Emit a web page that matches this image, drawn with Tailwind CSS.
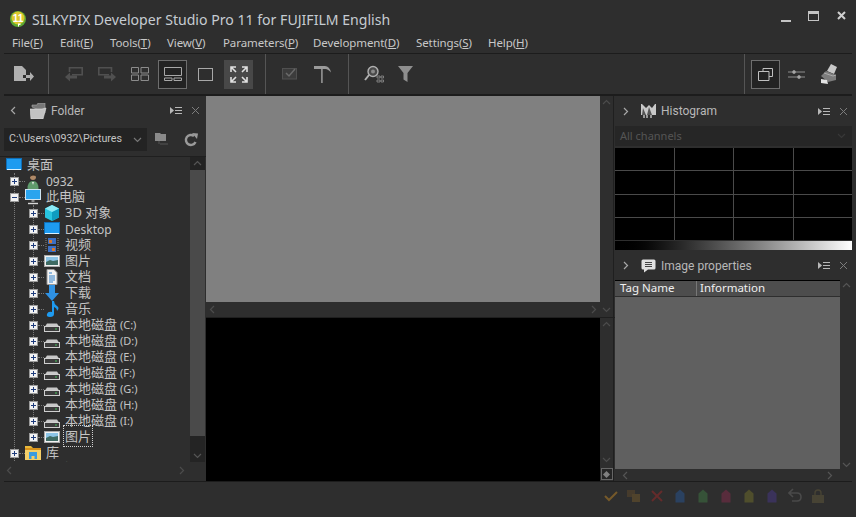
<!DOCTYPE html>
<html lang="en">
<head>
    <meta charset="UTF-8">
    <title>SILKYPIX Developer Studio Pro 11 for FUJIFILM English</title>
    <script src="https://cdn.jsdelivr.net/npm/@tailwindcss/browser@4"></script>
</head>
<body class="bg-[#2e2e2e]">
    <!-- shared icons -->
    <svg class="hidden">
        <symbol id="up" viewBox="0 0 9 9"><path d="M1 6l3.500-3.500L8 6" fill="none" stroke="currentColor" stroke-width="1.200"/></symbol>
        <symbol id="down" viewBox="0 0 9 9"><path d="M1 3l3.500 3.500L8 3" fill="none" stroke="currentColor" stroke-width="1.200"/></symbol>
        <symbol id="left" viewBox="0 0 9 9"><path d="M6 1L2.500 4.500 6 8" fill="none" stroke="currentColor" stroke-width="1.200"/></symbol>
        <symbol id="right" viewBox="0 0 9 9"><path d="M3 1l3.500 3.500L3 8" fill="none" stroke="currentColor" stroke-width="1.200"/></symbol>
        <symbol id="options" viewBox="0 0 12 9"><path d="M0 1l4 3.500L0 8z" fill="#b8b8b8"/><path d="M5 1.500h7M5 4.500h7M5 7.500h7" stroke="#b8b8b8"/></symbol>
        <symbol id="close" viewBox="0 0 9 9"><path d="M1 1l7 7M8 1L1 8" stroke="#7d7d7d"/></symbol>
        <symbol id="plus" viewBox="0 0 9 9"><rect x=".5" y=".5" width="8" height="8" fill="#f2f2f2" stroke="#9a9a9a"/><path d="M2 4.500h5M4.500 2v5" stroke="#1d3b7c"/></symbol>
        <symbol id="minus" viewBox="0 0 9 9"><rect x=".5" y=".5" width="8" height="8" fill="#f2f2f2" stroke="#9a9a9a"/><path d="M2 4.500h5" stroke="#1d3b7c"/></symbol>
        <symbol id="monitor" viewBox="0 0 16 16"><rect x=".5" y=".5" width="15" height="10" fill="#2aa4ee" stroke="#cfe4f2"/><path d="M6.500 11h3v2h-3z" fill="#8a8a8a"/><path d="M3 14.500h10" stroke="#d8d8d8" stroke-width="1.400"/></symbol>
        <symbol id="desk" viewBox="0 0 16 16"><rect x=".5" y="1.500" width="15" height="11" fill="#1e9bf0" stroke="#0f6fb8"/><path d="M1 12.500h14" stroke="#d8f0ff"/></symbol>
        <symbol id="user" viewBox="0 0 16 16"><circle cx="8" cy="4" r="3" fill="#b08a68"/><path d="M5 4Q5 .5 8 .5T11 3.500Q8 1.500 5 4z" fill="#2c2620"/><path d="M2.500 16q0-8 5.500-8t5.500 8z" fill="#5f9a6c"/><path d="M7 9h2l-1 3z" fill="#e8e8e8"/></symbol>
        <symbol id="cube" viewBox="0 0 16 16"><path d="M8 0l7 3.500v9L8 16l-7-3.500v-9z" fill="#28c4e0"/><path d="M8 7l7-3.500v9L8 16z" fill="#0f9cc0"/><path d="M8 7L1 3.500 8 0l7 3.500z" fill="#8ceaf6"/></symbol>
        <symbol id="film" viewBox="0 0 16 16"><rect x="1" y="0" width="14" height="16" fill="#2c2c2c"/><rect x="4" y="1" width="8" height="6" fill="#3b6fc4"/><rect x="4" y="9" width="8" height="6" fill="#3b6fc4"/><path d="M5 3h3v3H5zM8 11h3v3H8z" fill="#d8772a"/><path d="M2 1v14M14 1v14" stroke="#888" stroke-dasharray="1 1"/></symbol>
        <symbol id="pic" viewBox="0 0 16 16"><rect x=".5" y="2.500" width="15" height="11" fill="#f2f2f2" stroke="#aaa"/><rect x="2" y="4" width="12" height="8" fill="#8cc4e6"/><path d="M2 9l4-2 3 1 5-1v5H2z" fill="#3f6b63"/></symbol>
        <symbol id="doc" viewBox="0 0 16 16"><path d="M3 .5h7l3 3V15.500H3z" fill="#f4f4f4" stroke="#999"/><path d="M5 4h3M5 7h6M5 9h6M5 11h6M5 13h4" stroke="#2f7fc8"/></symbol>
        <symbol id="dl" viewBox="0 0 16 16"><path d="M5 0h6v8h4l-7 8-7-8h4z" fill="#2f92e4"/></symbol>
        <symbol id="note" viewBox="0 0 16 16"><path d="M8 0h2q0 3 3 5t0 5q0-3-3-4v7q0 3-4 3t-3-3 5-2z" fill="#1e9bf0"/></symbol>
        <symbol id="drive" viewBox="0 0 16 16"><path d="M3 6.500h10l2 3H1z" fill="#c8c8c8"/><rect x=".5" y="9.500" width="15" height="5" fill="#3c3c3c" stroke="#cfcfcf"/><path d="M11 12h2" stroke="#46c35a"/></symbol>
        <symbol id="lib" viewBox="0 0 16 16"><path d="M0 1h6l2 2h8v12H0z" fill="#e8b93c"/><rect x="0" y="3" width="16" height="2" fill="#d9931c"/><rect x="0" y="5" width="16" height="10" fill="#f4cf68"/><rect x="4" y="7" width="8" height="7" fill="#3a9be0"/><rect x="6.500" y="11" width="3" height="3" fill="#f4cf68"/></symbol>
        <symbol id="net" viewBox="0 0 16 16"><circle cx="8" cy="8" r="7" fill="#8cc4e6"/><path d="M4 5q4-3 8 0l-2 5-5-1z" fill="#e8f4fc"/></symbol>
        <symbol id="tag" viewBox="0 0 14 14"><path d="M2.500 4.500L7 .5l4.500 4V13.500h-9z" fill="currentColor"/></symbol>
    </svg>

    <div class="flex flex-col w-[856px] h-[517px] overflow-hidden bg-[#2e2e2e] text-[#c4c4c4] font-['Noto_Sans','Noto_Sans_CJK_SC',sans-serif]">
        <!-- title bar -->
        <div class="flex items-center h-[33px] shrink-0 pl-[10px] pr-[10px]">
            <svg class="w-[16px] h-[16px] mt-[4px]" viewBox="0 0 16 16">
                <circle cx="8" cy="8" r="8" fill="#5da832"/>
                <circle cx="8" cy="7" r="6.500" fill="#dcc82c"/>
                <text x="8" y="10.500" font-size="10" font-weight="700" text-anchor="middle" fill="#fff" font-family="Liberation Sans">11</text>
                <path d="M8 12.500h2.500v1.500H9v1.500H8z" fill="#fff"/>
            </svg>
            <span class="ml-[6px] mt-[7px] text-[14.100px] leading-none text-[#c6ccd2]">SILKYPIX Developer Studio Pro 11 for FUJIFILM English</span>
            <div class="ml-auto flex items-center">
                <div class="w-[10px] h-[2px] bg-[#c4c4c4] mt-[8px] mr-[17px]"></div>
                <div class="w-[11px] h-[10px] border border-t-[3px] border-[#c4c4c4] mr-[18px] -mt-[2px]"></div>
                <svg class="w-[9px] h-[9px] -mt-[2px]" viewBox="0 0 9 9"><path d="M1 1l7 7M8 1L1 8" stroke="#d0d0d0" stroke-width="2"/></svg>
            </div>
        </div>

        <!-- menu -->
        <div class="flex h-[20px] shrink-0 items-center pl-[12px] text-[11.500px] tracking-[-.1px] leading-none text-[#c8c8c8]">
            <span class="w-[48px]">File(<u>F</u>)</span>
            <span class="w-[50px]">Edit(<u>E</u>)</span>
            <span class="w-[57px]">Tools(<u>T</u>)</span>
            <span class="w-[56px]">View(<u>V</u>)</span>
            <span class="w-[90px]">Parameters(<u>P</u>)</span>
            <span class="w-[103px]">Development(<u>D</u>)</span>
            <span class="w-[72px]">Settings(<u>S</u>)</span>
            <span>Help(<u>H</u>)</span>
        </div>

        <!-- toolbar -->
        <div class="flex h-[43px] shrink-0 items-stretch mx-[4px] border-t border-[#1c1c1c] border-b-[2px] border-b-[#1c1c1c]">
            <div class="flex items-center w-[45px] border-r border-[#555] pl-[10px]">
                <svg class="w-[20px] h-[16px]" viewBox="0 0 20 16"><path d="M0 0h8l4 4v5H9v3h3v3H0z" fill="#b0b0b0"/><path d="M12 9h4V6l4 4.500-4 4.500v-3h-4z" fill="#b0b0b0"/></svg>
            </div>
            <div class="flex items-center gap-[4px] pl-[10px] pr-[12px] border-r border-[#555]">
                <div class="flex items-center justify-center w-[29px] h-[29px]"><svg class="w-[18px] h-[15px]" viewBox="0 0 18 15"><path d="M4.500 5V.8h12.700v7H7" fill="none" stroke="#505050" stroke-width="1.600"/><path d="M0 10l5-4.500V8.500h7v3H5V14.500z" fill="#505050"/></svg></div>
                <div class="flex items-center justify-center w-[29px] h-[29px]"><svg class="w-[18px] h-[15px]" viewBox="0 0 18 15"><path d="M13.500 5V.8H.8v7H11" fill="none" stroke="#505050" stroke-width="1.600"/><path d="M18 10l-5-4.500V8.500H6v3h7V14.500z" fill="#505050"/></svg></div>
                <div class="flex items-center justify-center w-[29px] h-[29px]"><svg class="w-[18px] h-[14px]" viewBox="0 0 18 14" fill="none" stroke="#8c8c8c"><path d="M.5.500h7v5.500h-7zM10 .5h7.500v5.500H10zM.5 8h7v5.500h-7zM10 8h7.500v5.500H10z"/></svg></div>
                <div class="flex items-center justify-center w-[29px] h-[29px] bg-[#232323] border border-[#6e6e6e]"><svg class="w-[18px] h-[14px]" viewBox="0 0 18 14" fill="none" stroke="#a8a8a8"><path d="M.5.500h17v8h-17zM.5 11h7.500v2.500H.5zM10 11h7.500v2.500H10z"/></svg></div>
                <div class="flex items-center justify-center w-[29px] h-[29px]"><div class="w-[15px] h-[13px] border border-[#a8a8a8]"></div></div>
                <div class="flex items-center justify-center w-[29px] h-[29px] bg-[#484848]"><svg class="w-[18px] h-[17px]" viewBox="0 0 18 17" fill="none" stroke="#e0e0e0" stroke-width="1.600"><path d="M1 6V1h5M1 1l5 5M17 6V1h-5M17 1l-5 5M1 11v5h5M1 16l5-5M17 11v5h-5M17 16l-5-5"/></svg></div>
            </div>
            <div class="flex items-center gap-[4px] pl-[9px] pr-[11px] border-r border-[#555]">
                <div class="flex items-center justify-center w-[29px] h-[29px]"><svg class="w-[16px] h-[12px]" viewBox="0 0 16 12"><rect x=".5" y=".5" width="14" height="10.500" fill="#3c3c3c" stroke="#505050"/><path d="M4 5l3 3 6-7" fill="none" stroke="#6a6a6a" stroke-width="1.500"/></svg></div>
                <div class="flex items-center justify-center w-[29px] h-[29px]"><svg class="w-[17px] h-[17px]" viewBox="0 0 17 17"><path d="M0 0h11q4.500 0 6 6.500-3-3.500-5.500-3.500H0z" fill="#9a9a9a"/><path d="M7 3h1.800v14H7z" fill="#8a8a8a"/></svg></div>
            </div>
            <div class="flex items-center pl-[10px]">
                <div class="flex items-center justify-center w-[29px] h-[29px]"><svg class="w-[20px] h-[18px]" viewBox="0 0 20 18"><circle cx="9" cy="6.500" r="5" fill="#4a4a4a" stroke="#b0b0b0" stroke-width="1.400"/><circle cx="9" cy="6.500" r="2" fill="#8a8a8a"/><path d="M5 10l-4 5" stroke="#b0b0b0" stroke-width="2"/><path d="M13 11h3v2h-3zM17 11h2.500v2H17zM13 15h3v2h-3zM17 15h2.500v2H17z" fill="none" stroke="#909090" stroke-width=".8"/></svg></div>
                <div class="flex items-center justify-center w-[29px] h-[29px] ml-[3px]"><svg class="w-[15px] h-[16px]" viewBox="0 0 15 16"><path d="M0 0h15L9.500 7v9l-4-2.500V7z" fill="#8e8e8e"/></svg></div>
            </div>
            <div class="flex items-center ml-auto w-[108px] border-l border-[#555] pl-[6px]">
                <div class="flex items-center justify-center w-[29px] h-[29px] bg-[#232323] border border-[#6e6e6e]"><svg class="w-[15px] h-[13px]" viewBox="0 0 15 13" fill="none" stroke="#c0c0c0"><path d="M5 3V.5h9.500v8H11M.5 3.500H11v9H.5z"/></svg></div>
                <div class="flex items-center justify-center w-[29px] h-[29px] ml-[2px]"><svg class="w-[17px] h-[9px]" viewBox="0 0 17 9" fill="none" stroke="#8e8e8e"><path d="M0 2h17M0 7h17"/><circle cx="6" cy="2" r="1.500" fill="#b0b0b0"/><circle cx="11" cy="7" r="1.500" fill="#b0b0b0"/></svg></div>
                <div class="flex items-center justify-center w-[29px] h-[29px] ml-[4px]"><svg class="w-[17px] h-[20px]" viewBox="0 0 17 20"><path d="M6 7l4-7 6 3-3 7z" fill="#c8c8c8"/><path d="M0 12l5-5 10 4v5l-8 2z" fill="#7c7c7c"/><path d="M3 9l9 3 3-1" stroke="#aaa" fill="none"/><path d="M0 15l6 1 1 4-7-1z" fill="#e4e4e4"/></svg></div>
            </div>
        </div>

        <!-- panels -->
        <div class="flex h-[385px] shrink-0">
            <!-- folder panel -->
            <div class="flex flex-col w-[206px] shrink-0">
                <div class="flex items-center h-[29px] shrink-0 pl-[9px] text-[#b8b8b8]">
                    <svg class="w-[9px] h-[9px] shrink-0 text-[#a8a8a8]"><use href="#left"/></svg>
                    <svg class="w-[17px] h-[16px] ml-[12px] shrink-0" viewBox="0 0 17 16"><path d="M2 4V2h5l1-2h7v10z" fill="#777" stroke="#aaa" stroke-width=".6"/><path d="M0 6h12l4-1-3 11H1z" fill="#c2c2c2" stroke="#e0e0e0" stroke-width=".6"/></svg>
                    <span class="ml-[4px] mt-[1px] font-['Roboto'] text-[12px] leading-none">Folder</span>
                    <svg class="w-[12px] h-[9px] ml-auto shrink-0"><use href="#options"/></svg>
                    <svg class="w-[9px] h-[9px] ml-[9px] mr-[6px] shrink-0"><use href="#close"/></svg>
                </div>
                <div class="flex items-center h-[23px] mt-[3px] shrink-0">
                    <div class="flex items-center w-[143px] h-full ml-[4px] pl-[5px] pr-[5px] bg-[#232323] font-['Roboto'] text-[10.700px] leading-none whitespace-nowrap">
                        C:\Users\0932\Pictures
                        <svg class="w-[9px] h-[9px] ml-auto text-[#777]"><use href="#down"/></svg>
                    </div>
                    <svg class="w-[13px] h-[13px] ml-[8px]" viewBox="0 0 13 13"><path d="M0 0h5l1 1h5v7H0z" fill="#8a8a8a"/><path d="M5 11h8M4 8v3" stroke="#555"/></svg>
                    <svg class="w-[14px] h-[14px] ml-[16px]" viewBox="0 0 14 14"><path d="M11.500 9A5 5 0 1 1 10 3" fill="none" stroke="#9a9a9a" stroke-width="2.400"/><path d="M8 0l6 .5-1 5.500z" fill="#9a9a9a"/></svg>
                </div>
                <div class="flex h-[306px] mt-[5px] shrink-0 border-t border-[#1f1f1f]">
                    <div id="tree" class="w-[190px] h-full overflow-hidden text-[13px] leading-none"></div>
                    <div class="flex flex-col w-[15px] h-full">
                        <div class="flex items-center justify-center h-[13px] bg-[#232323]"><svg class="w-[9px] h-[9px] text-[#555]"><use href="#up"/></svg></div>
                        <div class="h-[266px] bg-[#4a4a4a]"></div>
                        <div class="flex items-end justify-center flex-1 bg-[#242424] pb-[2px]"><svg class="w-[9px] h-[9px] text-[#555]"><use href="#down"/></svg></div>
                    </div>
                </div>
                <div class="flex items-center justify-between h-[16px] px-[5px] pr-[20px] text-[#4c4c4c]">
                    <svg class="w-[9px] h-[9px]"><use href="#left"/></svg>
                    <svg class="w-[9px] h-[9px]"><use href="#right"/></svg>
                </div>
            </div>

            <!-- preview -->
            <div class="flex flex-col w-[409px] shrink-0">
                <div class="flex h-[222px] shrink-0 border-b border-[#1f1f1f]">
                    <div class="flex flex-col w-[394px]">
                        <div class="h-[206px] bg-[#808080]"></div>
                        <div class="flex items-center justify-between flex-1 px-[2px] text-[#4c4c4c]">
                            <svg class="w-[9px] h-[9px]"><use href="#left"/></svg>
                            <svg class="w-[9px] h-[9px]"><use href="#right"/></svg>
                        </div>
                    </div>
                    <div class="flex flex-col justify-between items-center w-[14px] pt-[2px] pb-[3px] border-r border-[#1f1f1f] text-[#4c4c4c]">
                        <svg class="w-[9px] h-[9px]"><use href="#up"/></svg>
                        <svg class="w-[9px] h-[9px]"><use href="#down"/></svg>
                    </div>
                </div>
                <div class="flex flex-1">
                    <div class="w-[394px] h-full bg-black"></div>
                    <div class="flex flex-col items-center w-[14px] pt-[2px] border-r border-[#1f1f1f] text-[#4c4c4c]">
                        <svg class="w-[9px] h-[9px]"><use href="#up"/></svg>
                        <svg class="w-[9px] h-[9px] mt-[126px]"><use href="#down"/></svg>
                        <div class="flex items-center justify-center w-[12px] h-[12px] mt-[4px] border border-[#666] bg-[#262626]"><div class="w-[5px] h-[5px] rotate-45 bg-[#808080]"></div></div>
                    </div>
                </div>
            </div>

            <!-- histogram and properties -->
            <div class="flex flex-col w-[237px] shrink-0">
                <div class="flex items-center h-[30px] shrink-0 pl-[6px] text-[#b8b8b8]">
                    <svg class="w-[9px] h-[9px] text-[#a8a8a8]"><use href="#right"/></svg>
                    <svg class="w-[15px] h-[14px] ml-[11px]" viewBox="0 0 15 14"><path d="M0 0h1l4 4 3-3 3 3 3-4h1v11H0z" fill="#c8c8c8"/><path d="M2 4l3 7H1zM8 3l3 8H6z" fill="#555"/><path d="M3 11v3M6 11v3M10 11v3" stroke="#fff"/></svg>
                    <span class="ml-[5px] font-['Roboto'] text-[12px] leading-none">Histogram</span>
                    <svg class="w-[12px] h-[9px] ml-auto"><use href="#options"/></svg>
                    <svg class="w-[9px] h-[9px] ml-[9px] mr-[4px]"><use href="#close"/></svg>
                </div>
                <div class="flex items-center justify-between h-[20px] shrink-0 pl-[5px] pr-[6px] pb-[2px] bg-[#262626] text-[11px] leading-none text-[#555]">
                    All channels
                    <svg class="w-[9px] h-[9px] text-[#383838]"><use href="#down"/></svg>
                </div>
                <div class="grid grid-cols-4 grid-rows-4 h-[92px] mt-[2px] shrink-0 bg-[#4a4a4a] gap-px">
                    <div class="bg-black"></div><div class="bg-black"></div><div class="bg-black"></div><div class="bg-black"></div>
                    <div class="bg-black"></div><div class="bg-black"></div><div class="bg-black"></div><div class="bg-black"></div>
                    <div class="bg-black"></div><div class="bg-black"></div><div class="bg-black"></div><div class="bg-black"></div>
                    <div class="bg-black"></div><div class="bg-black"></div><div class="bg-black"></div><div class="bg-black"></div>
                </div>
                <div class="h-[9px] mt-[1px] shrink-0 bg-gradient-to-r from-black to-white"></div>
                <div class="flex items-center h-[30px] shrink-0 pl-[6px] pt-[1px] text-[#b8b8b8]">
                    <svg class="w-[9px] h-[9px] text-[#a8a8a8]"><use href="#right"/></svg>
                    <svg class="w-[15px] h-[14px] ml-[11px]" viewBox="0 0 15 14"><path d="M2 .5h11q1.500 0 1.500 1.500v7q0 1.500-1.500 1.500H7L3 13.500v-3H2Q.5 10.500.5 9V2Q.5.5 2 .5z" fill="#e0e0e0"/><path d="M4 3.500h7M4 5.500h7M4 7.500h7" stroke="#444"/></svg>
                    <span class="ml-[5px] font-['Roboto'] text-[12px] leading-none">Image properties</span>
                    <svg class="w-[12px] h-[9px] ml-auto"><use href="#options"/></svg>
                    <svg class="w-[9px] h-[9px] ml-[9px] mr-[4px]"><use href="#close"/></svg>
                </div>
                <div class="flex flex-1">
                    <div class="flex flex-col w-[225px]">
                        <div class="flex items-center h-[16px] shrink-0 bg-[#4d4d4d] border-t border-black text-[11.500px] leading-none text-[#f0f0f0]">
                            <span class="w-[82px] h-full pl-[5px] pb-[1px] flex items-center border-r border-[#777]">Tag Name</span>
                            <span class="pl-[3px] pb-[1px]">Information</span>
                        </div>
                        <div class="flex-1 mt-px bg-[#606060]"></div>
                        <div class="flex items-center justify-between h-[12px] shrink-0 px-[6px] text-[#555]">
                            <svg class="w-[9px] h-[9px]"><use href="#left"/></svg>
                            <svg class="w-[9px] h-[9px]"><use href="#right"/></svg>
                        </div>
                    </div>
                    <div class="flex flex-col justify-between items-center w-[12px] pt-[1px] pb-[12px] text-[#555]">
                        <svg class="w-[9px] h-[9px]"><use href="#up"/></svg>
                        <svg class="w-[9px] h-[9px]"><use href="#down"/></svg>
                    </div>
                </div>
            </div>
        </div>

        <!-- status bar -->
        <div class="flex items-center flex-1 mx-[4px] border-t border-[#1c1c1c] pl-[600px] pb-[8px] gap-[9px]">
            <svg class="w-[14px] h-[12px]" viewBox="0 0 14 12"><path d="M1 6l4 4 8-8" fill="none" stroke="#75592a" stroke-width="2"/></svg>
            <svg class="w-[14px] h-[12px]" viewBox="0 0 14 12"><path d="M0 0h8v7H0z" fill="#463b2c"/><path d="M5 4h8v8H5z" fill="#50432c"/></svg>
            <svg class="w-[14px] h-[12px]" viewBox="0 0 14 12"><path d="M2 1l10 10M12 1L2 11" stroke="#642b2b" stroke-width="2"/></svg>
            <svg class="w-[14px] h-[14px] text-[#2a4160]"><use href="#tag"/></svg>
            <svg class="w-[14px] h-[14px] text-[#365238]"><use href="#tag"/></svg>
            <svg class="w-[14px] h-[14px] text-[#582c3c]"><use href="#tag"/></svg>
            <svg class="w-[14px] h-[14px] text-[#4f4e2c]"><use href="#tag"/></svg>
            <svg class="w-[14px] h-[14px] text-[#3a325a]"><use href="#tag"/></svg>
            <svg class="w-[14px] h-[15px]" viewBox="0 0 14 15"><path d="M5 1L1 5l4 4M1 5h8q4 0 4 4t-4 4H4" fill="none" stroke="#4a4a4a" stroke-width="1.600"/></svg>
            <svg class="w-[14px] h-[14px]" viewBox="0 0 14 14"><path d="M4 6V4q0-3 3-3t3 3v2" fill="none" stroke="#474334" stroke-width="1.400"/><rect x="1" y="6" width="12" height="8" fill="#474334"/></svg>
        </div>
    </div>

    <script>
        const row = (box, icon, label, extra) => `
            <div class="flex items-center h-[16px] -ml-[4px] whitespace-nowrap">
                <svg class="w-[9px] h-[9px] shrink-0"><use href="#${box}"/></svg>
                <span class="w-[6px] shrink-0 border-t border-dotted border-[#7a7a7a]"></span>
                <svg class="w-[16px] h-[16px] shrink-0"><use href="#${icon}"/></svg>
                <span class="ml-[5px] -translate-y-[1px]">${label}${extra ? `<span class="text-[11px]"> ${extra}</span>` : ''}</span>
            </div>`;

        const latin = text => `<span class="inline-block translate-y-[1px] text-[12px]">${text}</span>`;

        const drives = ['C', 'D', 'E', 'F', 'G', 'H', 'I']
            .map(d => row('plus', 'drive', '本地磁盘', `(${d}:)`)).join('');

        document.getElementById('tree').innerHTML = `
            <div class="flex items-center h-[16px] pl-[6px]">
                <svg class="w-[16px] h-[16px]"><use href="#desk"/></svg>
                <span class="ml-[5px] -translate-y-[1px]">桌面</span>
            </div>
            <div class="relative ml-[14px]">
                <span class="absolute left-0 top-0 bottom-0 border-l border-dotted border-[#7a7a7a]"></span>
                <div class="relative">
                    ${row('plus', 'user', latin('0932'))}
                    ${row('minus', 'monitor', '此电脑')}
                    <div class="relative ml-[19px]">
                        <span class="absolute left-0 top-0 bottom-[8px] border-l border-dotted border-[#7a7a7a]"></span>
                        <div class="relative">
                            ${row('plus', 'cube', '3D 对象')}
                            ${row('plus', 'desk', latin('Desktop'))}
                            ${row('plus', 'film', '视频')}
                            ${row('plus', 'pic', '图片')}
                            ${row('plus', 'doc', '文档')}
                            ${row('plus', 'dl', '下载')}
                            ${row('plus', 'note', '音乐')}
                            ${drives}
                            ${row('plus', 'pic', '<span class="-ml-[1px] px-px py-px outline outline-dotted outline-[#d0d0d0]">图片</span>')}
                        </div>
                    </div>
                    ${row('plus', 'lib', '库')}
                    ${row('plus', 'net', '网络')}
                </div>
            </div>`;
    </script>
</body>
</html>
